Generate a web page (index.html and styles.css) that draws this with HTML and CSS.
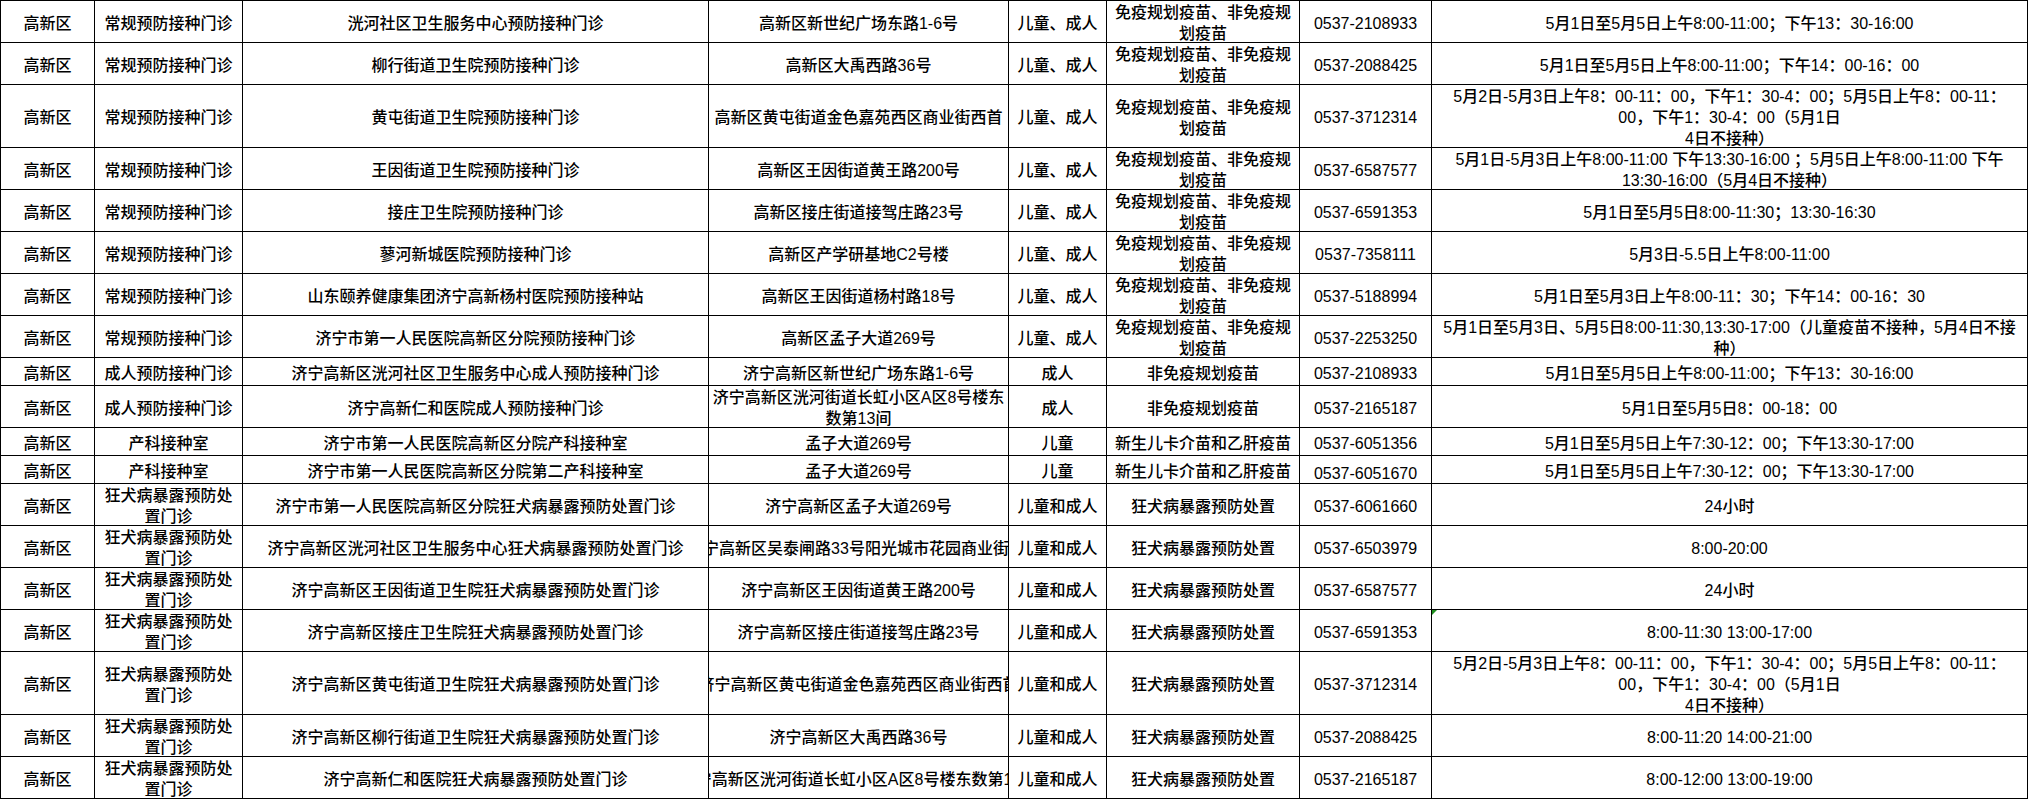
FILE: index.html
```html
<!DOCTYPE html>
<html lang="zh-CN">
<head>
<meta charset="utf-8">
<title>高新区预防接种门诊</title>
<link rel="stylesheet" href="styles.css">
</head>
<body>
<div class="sheet">
  <div><span>高新区</span></div><div><span>常规预防接种门诊</span></div><div><span>洸河社区卫生服务中心预防接种门诊</span></div><div><span>高新区新世纪广场东路1-6号</span></div><div><span>儿童、成人</span></div><div><span>免疫规划疫苗、非免疫规<br>划疫苗</span></div><div><span>0537-2108933</span></div><div><span>5月1日至5月5日上午8:00-11:00；下午13：30-16:00</span></div>

  <div><span>高新区</span></div><div><span>常规预防接种门诊</span></div><div><span>柳行街道卫生院预防接种门诊</span></div><div><span>高新区大禹西路36号</span></div><div><span>儿童、成人</span></div><div><span>免疫规划疫苗、非免疫规<br>划疫苗</span></div><div><span>0537-2088425</span></div><div><span>5月1日至5月5日上午8:00-11:00；下午14：00-16：00</span></div>

  <div><span>高新区</span></div><div><span>常规预防接种门诊</span></div><div><span>黄屯街道卫生院预防接种门诊</span></div><div><span>高新区黄屯街道金色嘉苑西区商业街西首</span></div><div><span>儿童、成人</span></div><div><span>免疫规划疫苗、非免疫规<br>划疫苗</span></div><div><span>0537-3712314</span></div><div><span>5月2日-5月3日上午8：00-11：00，下午1：30-4：00；5月5日上午8：00-11：<br>00，下午1：30-4：00（5月1日<br>4日不接种）</span></div>

  <div><span>高新区</span></div><div><span>常规预防接种门诊</span></div><div><span>王因街道卫生院预防接种门诊</span></div><div><span>高新区王因街道黄王路200号</span></div><div><span>儿童、成人</span></div><div><span>免疫规划疫苗、非免疫规<br>划疫苗</span></div><div><span>0537-6587577</span></div><div><span>5月1日-5月3日上午8:00-11:00 下午13:30-16:00 ；5月5日上午8:00-11:00 下午<br>13:30-16:00（5月4日不接种）</span></div>

  <div><span>高新区</span></div><div><span>常规预防接种门诊</span></div><div><span>接庄卫生院预防接种门诊</span></div><div><span>高新区接庄街道接驾庄路23号</span></div><div><span>儿童、成人</span></div><div><span>免疫规划疫苗、非免疫规<br>划疫苗</span></div><div><span>0537-6591353</span></div><div><span>5月1日至5月5日8:00-11:30；13:30-16:30</span></div>

  <div><span>高新区</span></div><div><span>常规预防接种门诊</span></div><div><span>蓼河新城医院预防接种门诊</span></div><div><span>高新区产学研基地C2号楼</span></div><div><span>儿童、成人</span></div><div><span>免疫规划疫苗、非免疫规<br>划疫苗</span></div><div><span>0537-7358111</span></div><div><span>5月3日-5.5日上午8:00-11:00</span></div>

  <div><span>高新区</span></div><div><span>常规预防接种门诊</span></div><div><span>山东颐养健康集团济宁高新杨村医院预防接种站</span></div><div><span>高新区王因街道杨村路18号</span></div><div><span>儿童、成人</span></div><div><span>免疫规划疫苗、非免疫规<br>划疫苗</span></div><div><span>0537-5188994</span></div><div><span>5月1日至5月3日上午8:00-11：30；下午14：00-16：30</span></div>

  <div><span>高新区</span></div><div><span>常规预防接种门诊</span></div><div><span>济宁市第一人民医院高新区分院预防接种门诊</span></div><div><span>高新区孟子大道269号</span></div><div><span>儿童、成人</span></div><div><span>免疫规划疫苗、非免疫规<br>划疫苗</span></div><div><span>0537-2253250</span></div><div><span>5月1日至5月3日、5月5日8:00-11:30,13:30-17:00（儿童疫苗不接种，5月4日不接<br>种）</span></div>

  <div><span>高新区</span></div><div><span>成人预防接种门诊</span></div><div><span>济宁高新区洸河社区卫生服务中心成人预防接种门诊</span></div><div><span>济宁高新区新世纪广场东路1-6号</span></div><div><span>成人</span></div><div><span>非免疫规划疫苗</span></div><div><span>0537-2108933</span></div><div><span>5月1日至5月5日上午8:00-11:00；下午13：30-16:00</span></div>

  <div><span>高新区</span></div><div><span>成人预防接种门诊</span></div><div><span>济宁高新仁和医院成人预防接种门诊</span></div><div><span>济宁高新区洸河街道长虹小区A区8号楼东<br>数第13间</span></div><div><span>成人</span></div><div><span>非免疫规划疫苗</span></div><div><span>0537-2165187</span></div><div><span>5月1日至5月5日8：00-18：00</span></div>

  <div><span>高新区</span></div><div><span>产科接种室</span></div><div><span>济宁市第一人民医院高新区分院产科接种室</span></div><div><span>孟子大道269号</span></div><div><span>儿童</span></div><div><span>新生儿卡介苗和乙肝疫苗</span></div><div><span>0537-6051356</span></div><div><span>5月1日至5月5日上午7:30-12：00；下午13:30-17:00</span></div>

  <div><span>高新区</span></div><div><span>产科接种室</span></div><div><span>济宁市第一人民医院高新区分院第二产科接种室</span></div><div><span>孟子大道269号</span></div><div><span>儿童</span></div><div><span>新生儿卡介苗和乙肝疫苗</span></div><div class="low"><span>0537-6051670</span></div><div><span>5月1日至5月5日上午7:30-12：00；下午13:30-17:00</span></div>

  <div><span>高新区</span></div><div><span>狂犬病暴露预防处<br>置门诊</span></div><div><span>济宁市第一人民医院高新区分院狂犬病暴露预防处置门诊</span></div><div><span>济宁高新区孟子大道269号</span></div><div><span>儿童和成人</span></div><div><span>狂犬病暴露预防处置</span></div><div><span>0537-6061660</span></div><div><span>24小时</span></div>

  <div><span>高新区</span></div><div><span>狂犬病暴露预防处<br>置门诊</span></div><div><span>济宁高新区洸河社区卫生服务中心狂犬病暴露预防处置门诊</span></div><div><span class="shift-left">济宁高新区吴泰闸路33号阳光城市花园商业街</span></div><div><span>儿童和成人</span></div><div><span>狂犬病暴露预防处置</span></div><div><span>0537-6503979</span></div><div><span>8:00-20:00</span></div>

  <div><span>高新区</span></div><div><span>狂犬病暴露预防处<br>置门诊</span></div><div><span>济宁高新区王因街道卫生院狂犬病暴露预防处置门诊</span></div><div><span>济宁高新区王因街道黄王路200号</span></div><div><span>儿童和成人</span></div><div><span>狂犬病暴露预防处置</span></div><div><span>0537-6587577</span></div><div><span>24小时</span></div>

  <div><span>高新区</span></div><div><span>狂犬病暴露预防处<br>置门诊</span></div><div><span>济宁高新区接庄卫生院狂犬病暴露预防处置门诊</span></div><div><span>济宁高新区接庄街道接驾庄路23号</span></div><div><span>儿童和成人</span></div><div><span>狂犬病暴露预防处置</span></div><div><span>0537-6591353</span></div><div class="flag"><span>8:00-11:30 13:00-17:00</span></div>

  <div><span>高新区</span></div><div><span>狂犬病暴露预防处<br>置门诊</span></div><div><span>济宁高新区黄屯街道卫生院狂犬病暴露预防处置门诊</span></div><div><span>济宁高新区黄屯街道金色嘉苑西区商业街西首</span></div><div><span>儿童和成人</span></div><div><span>狂犬病暴露预防处置</span></div><div><span>0537-3712314</span></div><div><span>5月2日-5月3日上午8：00-11：00，下午1：30-4：00；5月5日上午8：00-11：<br>00，下午1：30-4：00（5月1日<br>4日不接种）</span></div>

  <div><span>高新区</span></div><div><span>狂犬病暴露预防处<br>置门诊</span></div><div><span>济宁高新区柳行街道卫生院狂犬病暴露预防处置门诊</span></div><div><span>济宁高新区大禹西路36号</span></div><div><span>儿童和成人</span></div><div><span>狂犬病暴露预防处置</span></div><div><span>0537-2088425</span></div><div><span>8:00-11:20 14:00-21:00</span></div>

  <div><span>高新区</span></div><div><span>狂犬病暴露预防处<br>置门诊</span></div><div><span>济宁高新仁和医院狂犬病暴露预防处置门诊</span></div><div><span>济宁高新区洸河街道长虹小区A区8号楼东数第13间</span></div><div><span>儿童和成人</span></div><div><span>狂犬病暴露预防处置</span></div><div><span>0537-2165187</span></div><div><span>8:00-12:00 13:00-19:00</span></div>
</div>
</body>
</html>
```

FILE: styles.css
```css
html, body {
  margin: 0;
  padding: 0;
  background: #ffffff;
}

.sheet {
  display: grid;
  width: max-content;
  grid-template-columns: 94px 148px 466px 300px 98px 193px 132px 596px;
  grid-template-rows:
    42px 42px 63px 42px 42px 42px 42px 42px
    28px 42px 28px 28px
    42px 42px 42px 42px 63px 42px 42px;
  border-top: 1px solid #000;
  border-left: 1px solid #000;
  font-family: "Liberation Sans", "Noto Sans CJK SC", sans-serif;
  font-size: 16px;
  line-height: 21px;
  font-weight: 500;
  color: #000;
}

.sheet > div {
  box-sizing: border-box;
  border-right: 1px solid #000;
  border-bottom: 1px solid #000;
  display: flex;
  align-items: center;
  justify-content: center;
  text-align: center;
  white-space: nowrap;
  overflow: hidden;
  padding-top: 3px;
}

.sheet > div.low {
  padding-top: 8px;
}

.shift-left {
  margin-right: 21px;
}

.flag {
  position: relative;
}

.flag::before {
  content: "";
  position: absolute;
  left: 0;
  top: 0;
  border-top: 5px solid #1f8f1f;
  border-right: 5px solid transparent;
}
```
